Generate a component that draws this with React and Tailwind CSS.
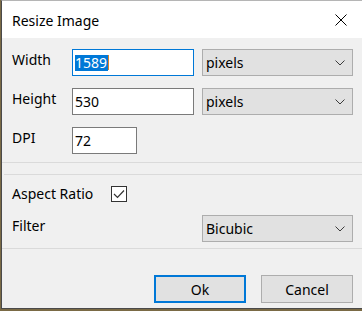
import React from "react";

function Chevron() {
  return (
    <svg width="10" height="6" viewBox="0 0 10 6" className="shrink-0">
      <path d="M0.5 0.5 L5 5 L9.5 0.5" fill="none" stroke="#3c3c3c" strokeWidth="1" />
    </svg>
  );
}

function Select({ value }) {
  return (
    <div className="ml-[8px] flex h-[27px] w-[151px] items-center justify-between border border-[#adadad] bg-[#e1e1e1] pl-[3px] pr-[7px] text-[14px] text-black">
      <span>{value}</span>
      <Chevron />
    </div>
  );
}

function Line() {
  return <div className="h-px w-full bg-[#dadada]" />;
}

export default function App() {
  return (
    <div
      className="h-[311px] w-[362px] overflow-hidden bg-[#7a6a45] pl-[1px]"
      style={{ fontFamily: '"Noto Sans", "Open Sans", sans-serif' }}
    >
      <div className="flex h-[309px] flex-col border-t border-l border-b border-t-[#b5b5b5] border-l-[#4a4a4a] border-b-[#4a4a4a] bg-[#f0f0f0]">
        {/* Title bar */}
        <div className="flex h-[37px] shrink-0 items-center justify-between bg-white pl-[10px] pr-[15px]">
          <span className="pt-[1px] text-[14px] text-black">Resize Image</span>
          <svg width="12" height="12" viewBox="0 0 12 12">
            <path d="M0.5 0.5 L11.5 11.5 M11.5 0.5 L0.5 11.5" stroke="#000" strokeWidth="1" />
          </svg>
        </div>

        {/* Size fields */}
        <div className="flex flex-col gap-[12px] pl-[10px] pt-[11px]">
          <div className="flex h-[27px] items-center">
            <span className="w-[60px] pb-[6px] text-[14px] text-black">Width</span>
            <div className="flex h-[27px] w-[122px] items-center border border-[#0078d7] bg-white pl-[2px]">
              <span className="bg-[#0078d7] pr-[1px] text-[14px] leading-[16px] text-white">1589</span>
              <span className="h-[15px] w-px bg-[#d9822b]" />
            </div>
            <Select value="pixels" />
          </div>
          <div className="flex h-[27px] items-center">
            <span className="w-[60px] pb-[6px] text-[14px] text-black">Height</span>
            <div className="flex h-[27px] w-[122px] items-center border border-[#7a7a7a] bg-white pl-[2px] text-[14px] text-black">
              530
            </div>
            <Select value="pixels" />
          </div>
          <div className="flex h-[27px] items-center">
            <span className="w-[60px] pb-[6px] text-[14px] text-black">DPI</span>
            <div className="flex h-[27px] w-[65px] items-center border border-[#7a7a7a] bg-white pl-[2px] text-[14px] text-black">
              72
            </div>
          </div>
        </div>

        <div className="mt-[8px]">
          <Line />
        </div>
        <div className="mt-[11px] pl-[2px]">
          <Line />
        </div>

        {/* Options */}
        <div className="flex flex-col pl-[10px] pt-[11px]">
          <div className="flex h-[16px] items-center">
            <span className="w-[99px] text-[14px] leading-[16px] text-black">Aspect Ratio</span>
            <div className="flex h-[16px] w-[16px] items-center justify-center border border-[#333] bg-white">
              <svg width="12" height="10" viewBox="0 0 12 10">
                <path d="M1 5 L4.5 8.5 L11 1.5" fill="none" stroke="#333" strokeWidth="1.2" />
              </svg>
            </div>
          </div>
          <div className="mt-[13px] flex h-[27px] items-center">
            <span className="w-[190px] pb-[6px] text-[14px] text-black">Filter</span>
            <div className="-ml-[8px]">
              <Select value="Bicubic" />
            </div>
          </div>
        </div>

        <div className="mt-[6px]">
          <Line />
        </div>

        {/* Buttons */}
        <div className="mt-[26px] flex gap-[15px] pl-[152px]">
          <button className="flex h-[28px] w-[92px] items-center justify-center border-2 border-[#0078d7] bg-[#e1e1e1] text-[14px] text-black">
            Ok
          </button>
          <button className="flex h-[28px] w-[92px] items-center justify-center border border-[#adadad] bg-[#e1e1e1] text-[14px] text-black">
            Cancel
          </button>
        </div>
      </div>
    </div>
  );
}
